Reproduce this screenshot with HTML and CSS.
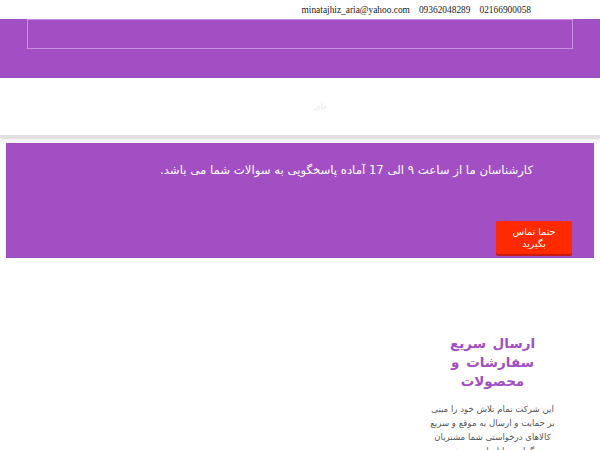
FILE: index.html
```
<!DOCTYPE html>
<html lang="fa">
<head>
<meta charset="utf-8">
<link rel="stylesheet" href="styles.css">
</head>
<body>
<div class="topbar">
  <span>minatajhiz_aria@yahoo.com</span>
  <span>09362048289</span>
  <span>02166900058</span>
</div>
<div class="header">
  <div class="header-box"></div>
</div>
<div class="search-area"><span class="ghost">جای</span></div>
<div class="divider"></div>
<div class="cta">
  <p class="cta-text">کارشناسان ما از ساعت ۹ الی 17 آماده پاسخگویی به سوالات شما می باشد.</p>
  <a class="cta-btn">حتما تماس<br>بگیرید</a>
</div>
<div class="features">
  <div class="feature">
    <h2 class="feature-title">ارسال سریع سفارشات و محصولات</h2>
    <p class="feature-text">این شرکت تمام تلاش خود را مبنی بر حمایت و ارسال به موقع و سریع کالاهای درخواستی شما مشتریان گرامی را انجام می دهد</p>
  </div>
</div>
</body>
</html>
```
FILE: styles.css
```
html, body {
  margin: 0;
  padding: 0;
  background: #fff;
  overflow: hidden;
}
body {
  font-family: "DejaVu Sans", sans-serif;
}
.topbar {
  height: 19px;
  display: flex;
  justify-content: flex-end;
  align-items: center;
  gap: 9px;
  padding-right: 69px;
  font-family: "Liberation Serif", serif;
  font-size: 9.4px;
  color: #222;
}
.header {
  height: 59px;
  background: #a14fc3;
  padding: 0 27px;
}
.header-box {
  height: 28px;
  border: 1px solid #c78fdc;
}
.search-area {
  height: 57px;
  display: flex;
  align-items: center;
  justify-content: center;
  padding-left: 42px;
}
.ghost {
  font-size: 8px;
  color: #e8e8e8;
}
.divider {
  height: 4px;
  background: #e2e0e2;
  border-bottom: 4px solid #f6f4f6;
}
.cta {
  margin: 0 6px;
  height: 115px;
  box-sizing: border-box;
  background: #a14fc3;
  direction: rtl;
  display: flex;
  flex-direction: column;
  align-items: flex-start;
  padding: 19px 61px 4px 22px;
}
.cta-text {
  margin: 0;
  color: #fff;
  font-size: 11.7px;
  line-height: 16px;
}
.cta-btn {
  margin-top: auto;
  margin-right: -39px;
  width: 76px;
  height: 33px;
  box-sizing: border-box;
  background: #ff2a00;
  color: #fff;
  font-size: 9.5px;
  line-height: 12px;
  text-align: center;
  display: flex;
  align-items: center;
  justify-content: center;
  border-radius: 2px;
  box-shadow: 0 2px 0 #c81c10;
}
.features {
  direction: rtl;
  padding: 76px 35px 0 0;
  display: flex;
}
.feature {
  width: 145px;
  text-align: center;
}
.feature-title {
  margin: 0 0 11px;
  color: #a14fc3;
  font-size: 13.5px;
  line-height: 19px;
  font-weight: bold;
  padding: 0 20px;
  word-spacing: 2px;
}
.feature-text {
  margin: 0;
  color: #555;
  font-size: 8.6px;
  line-height: 14px;
  padding: 0 8px;
}
```
